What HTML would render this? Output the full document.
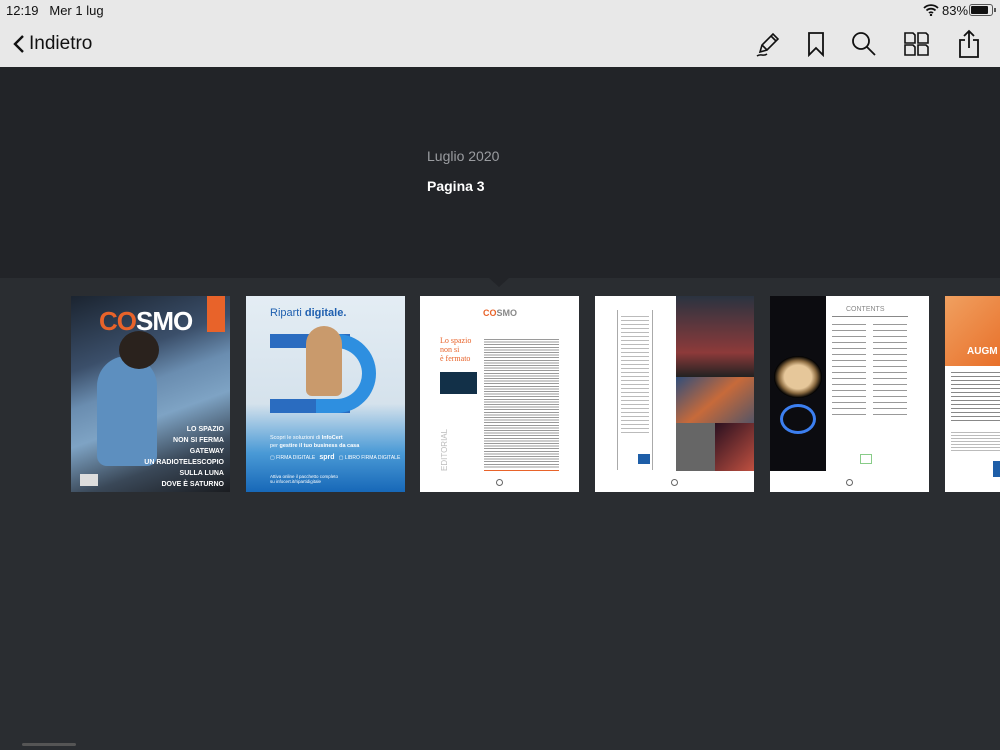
<!DOCTYPE html>
<html><head><meta charset="utf-8"><style>
*{margin:0;padding:0;box-sizing:border-box}
body{width:1000px;height:750px;overflow:hidden;background:#2a2d31;font-family:"Liberation Sans",sans-serif;position:relative}
.top{position:absolute;left:0;top:0;width:1000px;height:67px;background:#e8e8e8}
.band{position:absolute;left:0;top:67px;width:1000px;height:211px;background:#222428}
.tri{position:absolute;left:489px;top:278px;width:0;height:0;border-left:10px solid transparent;border-right:10px solid transparent;border-top:9px solid #222428}
.t{position:absolute;width:159px;height:196px;top:296px;overflow:hidden}
.abs{position:absolute}
</style></head><body>
<div class="top"></div>
<div class="abs" style="left:6px;top:3px;font-size:13px;color:#111">12:19&nbsp;&nbsp; Mer 1 lug</div>
<svg class="abs" style="left:923px;top:4px" width="16" height="12" viewBox="0 0 16 12"><path d="M1 4a10 10 0 0 1 14 0M3.5 6.5a6.5 6.5 0 0 1 9 0M6 9a3 3 0 0 1 4 0" stroke="#111" stroke-width="1.8" fill="none"/><circle cx="8" cy="11" r="1.2" fill="#111"/></svg>
<div class="abs" style="left:942px;top:3px;font-size:13px;color:#111">83%</div>
<div class="abs" style="left:969px;top:4px;width:24px;height:12px;border:1px solid #555;border-radius:3px;padding:1px"><div style="width:17px;height:8px;background:#111;border-radius:1px"></div></div>
<div class="abs" style="left:994px;top:8px;width:2px;height:4px;background:#555"></div>
<svg class="abs" style="left:12px;top:34px" width="14" height="20"><path d="M11 2L3 10l8 8" stroke="#111" stroke-width="2.4" fill="none"/></svg>
<div class="abs" style="left:29px;top:33px;font-size:19px;color:#111">Indietro</div>
<svg class="abs" style="left:754px;top:30px" width="28" height="28" viewBox="0 0 28 28" fill="none" stroke="#111" stroke-width="1.6"><path d="M6 22l2-7L19 4l5 5-11 11-7 2zM8 15l5 5M17 6l5 5"/><path d="M3 26c4-3 6 1 10-2"/></svg>
<svg class="abs" style="left:806px;top:31px" width="20" height="26" viewBox="0 0 20 26" fill="none" stroke="#111" stroke-width="1.8"><path d="M3 2h14v22l-7-7-7 7z"/></svg>
<svg class="abs" style="left:850px;top:30px" width="28" height="28" viewBox="0 0 28 28" fill="none" stroke="#111" stroke-width="1.8"><circle cx="11" cy="11" r="8"/><path d="M17 17l8 8"/></svg>
<svg class="abs" style="left:903px;top:31px" width="28" height="26" viewBox="0 0 28 26" fill="none" stroke="#111" stroke-width="1.6"><path d="M2 2h8l2 2v8H2zM15 2h8l2 2v8H15zM2 14h8l2 2v8H2zM15 14h8l2 2v8H15z"/></svg>
<svg class="abs" style="left:957px;top:29px" width="24" height="30" viewBox="0 0 24 30" fill="none" stroke="#111" stroke-width="1.8"><path d="M8 11H3v17h18V11h-5M12 19V2M7 7l5-5 5 5"/></svg>
<div class="band"></div><div class="tri"></div>
<div class="abs" style="left:427px;top:148px;font-size:14px;color:#9a9ca0">Luglio 2020</div>
<div class="abs" style="left:427px;top:178px;font-size:14px;color:#fff;font-weight:bold">Pagina 3</div>

<div class="t" style="left:71px;background:linear-gradient(160deg,#1b2430 0%,#3b4f6a 30%,#6a8db0 45%,#7ea3c4 60%,#3a4858 80%,#1a1c20 100%)">
 <div class="abs" style="left:26px;top:60px;width:60px;height:110px;background:#5d8fbf;border-radius:30px 30px 10px 10px"></div>
 <div class="abs" style="left:48px;top:35px;width:40px;height:38px;background:#2a221d;border-radius:50%"></div>
 <div class="abs" style="left:28px;top:10px;font-size:26px;font-weight:bold;color:#fff;letter-spacing:-1px"><span style="color:#e8632a">CO</span>SMO</div>
 <div class="abs" style="left:136px;top:0;width:18px;height:36px;background:#e8632a"></div>
 <div class="abs" style="right:6px;top:128px;font-size:7px;color:#fff;text-align:right;font-weight:bold;line-height:11px">LO SPAZIO<br>NON SI FERMA<br>GATEWAY<br>UN RADIOTELESCOPIO<br>SULLA LUNA<br>DOVE È SATURNO<br>LA NOTTE DEI GIGANTI</div>
 <div class="abs" style="left:9px;top:178px;width:18px;height:12px;background:#ddd"></div>
</div>
<div class="t" style="left:246px;background:linear-gradient(180deg,#e4edf4 0%,#d5e2ec 55%,#4a9ad6 80%,#1768b8 100%)">
 <div class="abs" style="left:24px;top:11px;font-size:11px;color:#2060b0">Riparti <b>digitale.</b></div>
 <div class="abs" style="left:24px;top:38px;width:80px;height:14px;background:#2a6cc0"></div>
 <div class="abs" style="left:24px;top:103px;width:80px;height:14px;background:#2a6cc0"></div>
 <div class="abs" style="left:70px;top:38px;width:60px;height:79px;border:14px solid #2e8fe0;border-left:none;border-radius:0 40px 40px 0"></div>
 <div class="abs" style="left:60px;top:30px;width:36px;height:70px;background:#c99a6c;border-radius:18px 18px 6px 6px"></div>
 <div class="abs" style="left:24px;top:138px;font-size:5.5px;color:#fff;line-height:8px">Scopri le soluzioni di <b>InfoCert</b><br>per <b>gestire il tuo business da casa</b></div>
 <div class="abs" style="left:24px;top:158px;font-size:5px;color:#fff">▢ FIRMA DIGITALE &nbsp; <b style="font-size:7px">sprd</b> &nbsp; ▢ LIBRO FIRMA DIGITALE</div>
 <div class="abs" style="left:24px;top:178px;font-size:4.5px;color:#fff">Attiva online il pacchetto completo<br>su infocert.it/ripartidigitale</div>
</div>
<div class="t" style="left:420px;background:#fff">
 <div class="abs" style="left:63px;top:12px;font-size:9px;font-weight:bold;color:#888"><span style="color:#e8632a">CO</span>SMO</div>
 <div class="abs" style="left:20px;top:40px;font-size:8px;color:#e8632a;font-family:'Liberation Serif',serif;line-height:9px">Lo spazio<br>non si<br>è fermato</div>
 <div class="abs" style="left:20px;top:76px;width:37px;height:22px;background:#123048"></div>
 <div class="abs" style="left:64px;top:43px;width:75px;height:130px;background:repeating-linear-gradient(180deg,#9a9a9a 0 1px,#fff 1px 2.6px)"></div>
 <div class="abs" style="left:64px;top:174px;width:75px;height:1px;background:#e8632a"></div>
 <div class="abs" style="left:20px;top:175px;font-size:8px;color:#bbb;transform:rotate(-90deg);transform-origin:left top">EDITORIAL</div>
 <div class="abs" style="left:76px;top:183px;width:7px;height:7px;border:1px solid #666;border-radius:50%"></div>
</div>
<div class="t" style="left:595px;background:#fff">
 <div class="abs" style="left:22px;top:14px;width:1px;height:160px;background:#aaa"></div>
 <div class="abs" style="left:57px;top:14px;width:1px;height:160px;background:#aaa"></div>
 <div class="abs" style="left:26px;top:20px;width:28px;height:120px;background:repeating-linear-gradient(180deg,#bbb 0 1px,#fff 1px 4px)"></div>
 <div class="abs" style="left:43px;top:158px;width:12px;height:10px;background:#1e5ea8"></div>
 <div class="abs" style="left:81px;top:0;width:78px;height:81px;background:linear-gradient(180deg,#2a3340,#8d3a3a 70%,#222)"></div>
 <div class="abs" style="left:81px;top:81px;width:78px;height:46px;background:linear-gradient(140deg,#314e7a,#c76a3a,#556)"></div>
 <div class="abs" style="left:81px;top:127px;width:39px;height:48px;background:#666"></div>
 <div class="abs" style="left:120px;top:127px;width:39px;height:48px;background:linear-gradient(135deg,#2a1020,#c05040)"></div>
 <div class="abs" style="left:76px;top:183px;width:7px;height:7px;border:1px solid #666;border-radius:50%"></div>
</div>
<div class="t" style="left:770px;background:#fff">
 <div class="abs" style="left:0;top:0;width:56px;height:175px;background:#0c0c10"></div>
 <div class="abs" style="left:4px;top:60px;width:48px;height:42px;border-radius:50%;background:radial-gradient(#e6c79a 40%,#8a6a40 55%,#000 70%)"></div>
 <div class="abs" style="left:10px;top:108px;width:36px;height:30px;border-radius:50%;border:3px solid #3c7ff0"></div>
 <div class="abs" style="left:76px;top:10px;font-size:7px;color:#888">CONTENTS</div>
 <div class="abs" style="left:62px;top:20px;width:76px;height:1px;background:#888"></div>
 <div class="abs" style="left:62px;top:28px;width:34px;height:95px;background:repeating-linear-gradient(180deg,#999 0 1px,#fff 1px 6px)"></div>
 <div class="abs" style="left:103px;top:28px;width:34px;height:95px;background:repeating-linear-gradient(180deg,#999 0 1px,#fff 1px 6px)"></div>
 <div class="abs" style="left:90px;top:158px;width:12px;height:10px;border:1px solid #8c8"></div>
 <div class="abs" style="left:76px;top:183px;width:7px;height:7px;border:1px solid #666;border-radius:50%"></div>
</div>
<div class="t" style="left:945px;width:55px;background:#fff">
 <div class="abs" style="left:0;top:0;width:55px;height:70px;background:linear-gradient(135deg,#f0a060,#e8702a)"></div>
 <div class="abs" style="left:22px;top:50px;font-size:10px;font-weight:bold;color:#fff">AUGM</div>
 <div class="abs" style="left:6px;top:76px;width:49px;height:50px;background:repeating-linear-gradient(180deg,#888 0 1px,#fff 1px 4px)"></div>
 <div class="abs" style="left:6px;top:136px;width:49px;height:20px;background:repeating-linear-gradient(180deg,#bbb 0 1px,#fff 1px 3px)"></div>
 <div class="abs" style="left:48px;top:165px;width:7px;height:16px;background:#1e5ea8"></div>
</div>
<div class="abs" style="left:22px;top:743px;width:54px;height:3px;border-radius:2px;background:#555"></div>
</body></html>
